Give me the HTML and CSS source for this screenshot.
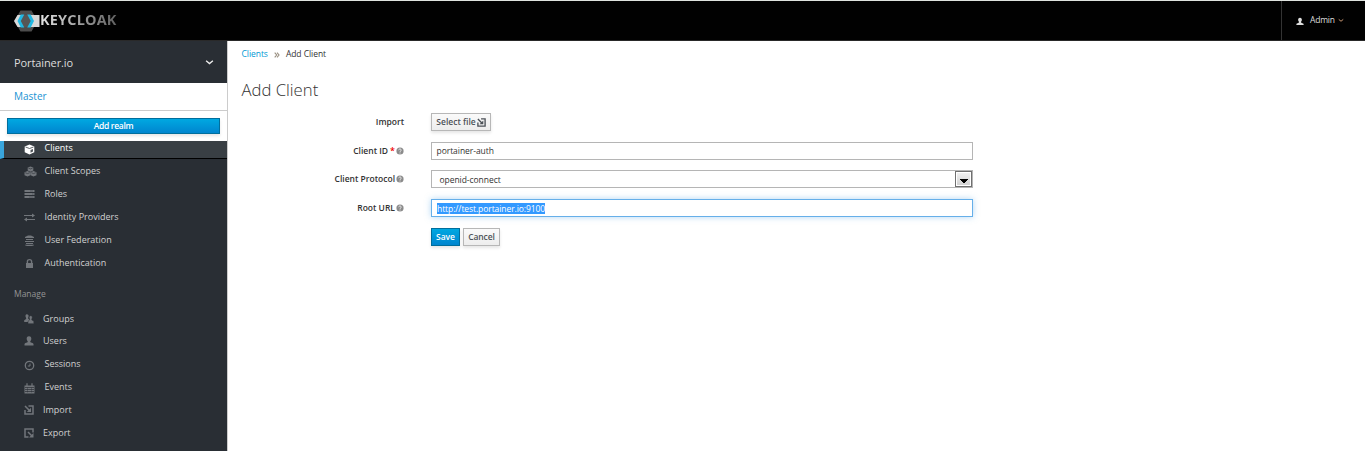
FILE: index.html
```html
<!DOCTYPE html>
<html lang="en">
<head>
<meta charset="utf-8">
<title>Keycloak - Add Client</title>
<link rel="stylesheet" href="styles.css">
</head>
<body>
<svg class="defs" aria-hidden="true">
  <symbol id="user" viewBox="0 0 10 10"><path d="M5 .3c1.700 0 2.500 1.200 2.300 2.700C7.200 4.200 6.700 4.800 6.300 5.200v.9c.3.700 3 .8 3.200 1.900V9.500H.5V8c.2-1.100 2.900-1.200 3.200-1.900v-.9C3.300 4.800 2.800 4.200 2.700 3 2.500 1.500 3.300.3 5 .3z" fill="currentColor"/></symbol>
  <symbol id="import" viewBox="0 0 10 10"><path d="M4.500 1H9v8H1V5M1 1l5 5" fill="none" stroke="currentColor" stroke-width="1.500"/><path d="M7 2.800V7H2.800z" fill="currentColor"/></symbol>
  <symbol id="help" viewBox="0 0 8 8"><circle cx="4" cy="4" r="3.600" fill="currentColor"/><path d="M2.700 3.200C2.800 1.500 5.400 1.700 5.200 3.200 5.100 4 4 3.900 4 4.900M4 5.500v1" fill="none" stroke="#fff" stroke-width=".8"/></symbol>
  <symbol id="chev" viewBox="0 0 8 6"><path d="M1 1.500 4 4l3-2.500" fill="none" stroke="currentColor" stroke-width="1.200"/></symbol>
</svg>
<header class="header">
  <div class="brand">
    <svg class="mark" width="26" height="22" viewBox="0 0 26 22">
      <path d="M6.500.5h11L23.500 11l-6 10.500h-11L.5 11z" fill="#4d4d4d"/>
      <path d="M3.500 5H25.500v12H3.500L0 11z" fill="#d8d8d8"/>
      <path d="M9 5h7L19 11l-3 6H9L6 11z" fill="#565656"/>
      <path d="M6.800 4.500h3.500L6.800 11l3.500 6.500H6.800L3.500 11z" fill="#22b8e3"/>
      <path d="M13.200 4.500h3.500L20 11l-3.300 6.500h-3.500L16.700 11z" fill="#22b8e3"/>
    </svg>
    <span class="wordmark">KEYCLOAK</span>
  </div>
  <div class="account">
    <svg class="account-icon"><use href="#user"/></svg>
    <span>Admin</span>
    <svg class="account-chev"><use href="#chev"/></svg>
  </div>
</header>
<div class="body">
  <nav class="sidebar">
    <div class="realm"><span>Portainer.io</span><svg class="realm-chev"><use href="#chev"/></svg></div>
    <div class="realm-menu">
      <a class="realm-link">Master</a>
      <div class="realm-add"><a class="add-button">Add realm</a></div>
    </div>
    <a class="item active"><svg viewBox="0 0 11 11"><path d="M5.500.6 10.300 2.400v5.800L5.500 10.600.7 8.200V2.400z" fill="#fff"/><path d="M1.500 3 5.500 4.500 9.500 3" fill="none" stroke="#393f44" stroke-width=".8"/><path d="M6.500 6 9 5v2.500L6.500 8.800z" fill="#54595e"/></svg><span>Clients</span></a>
    <a class="item"><svg class="wide" viewBox="0 0 13 11"><g fill="currentColor"><path d="M6.500.4 9.300 1.500v3L6.500 5.700 3.700 4.500v-3zM3.500 5 6.400 6.200v3L3.500 10.600.5 9.200v-3zM9.500 5l3 1.200v3l-3 1.400-2.900-1.400v-3z"/></g><path d="M4.300 2 6.500 2.900 8.700 2M1.200 6.700 3.500 7.600l2.300-.9M7.300 6.700l2.200.9 2.300-.9" fill="none" stroke="#292e34" stroke-width=".6"/></svg><span>Client Scopes</span></a>
    <a class="item"><svg viewBox="0 0 11 11"><path d="M.5 2h10M.5 5h10M.5 8h10" stroke="currentColor" stroke-width="2"/><path d="M6 2h3M8 5h1.500M5 8h4.500" stroke="#3d4348" stroke-width=".5"/></svg><span>Roles</span></a>
    <a class="item"><svg viewBox="0 0 11 11"><path d="M0 3.500h9M2 7.500h9" stroke="currentColor" stroke-width="1.100"/><path d="M8 1.500 11 3.500 8 5.500zM3 5.500 0 7.500 3 9.500z" fill="currentColor"/></svg><span>Identity Providers</span></a>
    <a class="item"><svg viewBox="0 0 11 11"><path d="M1 2 4 .5h3L10 2v1H1zM2 4h7v1H2zM1 6h9v1H1zM2 8h7v1H2zM1 9.700h9v.5L8 11H3L1 10.200z" fill="currentColor"/></svg><span>User Federation</span></a>
    <a class="item"><svg viewBox="0 0 11 11"><path d="M3.400 5.500V3.500c0-2.500 4.200-2.500 4.200 0v2" fill="none" stroke="currentColor" stroke-width="1.400"/><path d="M2 5h7v5H2z" fill="currentColor"/></svg><span>Authentication</span></a>
    <div class="section">Manage</div>
    <a class="item"><svg class="near" viewBox="0 0 10 10"><path d="M3 .3C4.900.4 5 2.300 4.200 3.800v1L6 6v2H.2V6.200L2.100 5v-1C1 2.200 1.300.3 3 .3z" fill="currentColor"/><path d="M6.500 1.700C8.400 1.600 8.700 3.500 7.800 5v1l2 .9V9.700H4V7.200L5.600 6V5C4.900 3.500 4.900 1.900 6.500 1.700z" fill="currentColor" stroke="#292e34" stroke-width=".5"/></svg><span>Groups</span></a>
    <a class="item short"><svg class="near"><use href="#user"/></svg><span>Users</span></a>
    <a class="item"><svg class="low" viewBox="0 0 11 11"><circle cx="5.500" cy="5.500" r="4.200" fill="none" stroke="currentColor" stroke-width="1.300"/><path d="M6 3.500V6H3.800" fill="none" stroke="currentColor"/></svg><span>Sessions</span></a>
    <a class="item"><svg class="low" viewBox="0 0 11 11"><path d="M.5 2.500h10v8H.5z" fill="currentColor"/><path d="M3 .3v3M8 .3v3" stroke="currentColor" stroke-width="1.200"/><path d="M1 4.500h9M1 6.500h9M1 8.500h9" stroke="#292e34" stroke-width=".7"/><path d="M3.500 4.500v5M7.500 4.500v5" stroke="#292e34" stroke-width=".4"/></svg><span>Events</span></a>
    <a class="item"><svg class="near"><use href="#import"/></svg><span>Import</span></a>
    <a class="item"><svg class="near" viewBox="0 0 10 10"><path d="M4.500 9H1V1h8v3.500M4 4l4 4" fill="none" stroke="currentColor" stroke-width="1.500"/><path d="M9.500 5v4.500H5z" fill="currentColor"/></svg><span>Export</span></a>
  </nav>
  <main class="main">
    <div class="crumbs"><a class="crumb-link">Clients</a><svg class="crumb-sep" viewBox="0 0 6 6"><path d="M.7.700 2.700 3 .7 5.300M3 .7 5 3 3 5.300" fill="none" stroke="#998f80" stroke-width="1.100"/></svg><span>Add Client</span></div>
    <h1 class="title">Add Client</h1>
    <form class="form">
      <div class="label"><span>Import</span></div>
      <div class="field"><span class="button select-file">Select file<svg><use href="#import"/></svg></span></div>
      <div class="label"><span>Client ID</span><b class="required">*</b><svg><use href="#help"/></svg></div>
      <div class="field"><div class="input">portainer-auth</div></div>
      <div class="label"><span>Client Protocol</span><svg><use href="#help"/></svg></div>
      <div class="field"><div class="input select"><span>openid-connect</span><span class="drop"><svg viewBox="0 0 8 4"><path d="M0 0h8v1H7v1H6v1H5v1H3V3H2V2H1V1H0z"/></svg></span></div></div>
      <div class="label"><span>Root URL</span><svg><use href="#help"/></svg></div>
      <div class="field"><div class="input focused"><mark class="selection">http://test.portainer.io:9100</mark></div></div>
      <div class="actions"><span class="button primary">Save</span><span class="button cancel">Cancel</span></div>
    </form>
  </main>
</div>
</body>
</html>
```

FILE: styles.css
```css
* { box-sizing: border-box; }
body { margin: 0; width: 1365px; height: 451px; overflow: hidden; background: #fff; color: #333; font: 9px/12px "Open Sans", sans-serif; }
svg { display: block; flex: none; }
span, a, mark { white-space: nowrap; }
.defs { display: none; }

.header { display: flex; justify-content: space-between; height: 41px; background: #010101; border-top: 1px solid #dfe3df; border-bottom: 1px solid #292929; }
.brand { display: flex; align-items: center; padding-left: 14px; }
.wordmark { margin-top: -1px; font: 700 14.500px/18px "Open Sans", sans-serif; letter-spacing: .15px; color: transparent; background: linear-gradient(90deg, #e4e4e4, #606060); background-clip: text; -webkit-background-clip: text; }
.account { display: flex; align-items: center; width: 84px; padding: 0 0 1px 14px; border-left: 1px solid #333; color: #ddd; font-size: 8.500px; letter-spacing: -.2px; }
.account-icon { width: 8px; height: 9px; margin: 2px 6px 0 0; }
.account-chev { width: 6px; height: 5px; margin: 1px 0 0 3px; color: #e0a880; }

.body { display: flex; height: 410px; }
.sidebar { width: 228px; flex: none; border-right: 1px solid #ccc; background: #292e34; color: #d1d1d1; }
.realm { display: flex; align-items: center; justify-content: space-between; height: 42px; padding: 2px 13px 0 14px; font-size: 11px; letter-spacing: -.1px; color: #ddd; }
.realm-chev { width: 9px; height: 7px; margin-top: -2px; color: #eee; }
.realm-menu { height: 58px; background: #fff; }
.realm-link { display: flex; align-items: center; height: 28px; padding: 0 0 2px 14px; border-bottom: 1px solid #ccc; font-size: 10px; color: #1a93d3; }
.realm-add { padding: 7px 7px 0; }
.add-button { display: block; height: 16px; border: 1px solid #006e9c; background: linear-gradient(#00a8e1, #0085cf); box-shadow: 0 2px 3px rgba(0, 0, 0, .1); color: #fff; font-weight: 600; font-size: 8.500px; letter-spacing: -.3px; line-height: 14px; text-align: center; }
.item { display: flex; align-items: center; height: 23px; padding-left: 24px; font-size: 9px; }
.item svg { width: 11px; height: 11px; margin-right: 9.500px; color: #72767b; position: relative; top: 1px; }
.item .wide { width: 13px; margin-right: 7.500px; }
.item .near { width: 10px; height: 10px; margin-right: 9px; top: 0; }
.item .low { top: 2px; }
.item.short { height: 22px; }
.active { height: 18px; padding: 0 0 3px 20px; border-left: 4px solid #39a5dc; border-bottom: 1px solid #000; background: #393f44; color: #fff; }
.section { display: flex; align-items: center; height: 33px; padding: 7px 0 0 14px; font-size: 8.500px; color: #949494; }

.main { flex: 1; padding: 7px 0 0 13.500px; }
.crumbs { display: flex; align-items: center; height: 12px; font-size: 8.500px; letter-spacing: -.05px; }
.crumb-link { color: #0099d3; }
.crumb-sep { width: 6px; height: 6px; margin: 1px 6px 0 6px; }
.title { height: 24px; margin: 18px 0 11px; font-weight: 300; font-size: 16.700px; line-height: 24px; }
.form { display: grid; grid-template-columns: 162.500px 542px; column-gap: 27px; grid-template-rows: 29px 28px 29px 29px 20px; }
.label { display: flex; align-items: center; justify-content: flex-end; height: 18px; font-weight: 600; font-size: 8.500px; }
.label svg { width: 8px; height: 8px; margin: 0 0 0 1px; color: #8b8b8b; }
.required { margin-left: 2px; color: #e00; font-weight: 600; font-size: 9px; }
.button { display: flex; align-items: center; justify-content: center; height: 18px; border: 1px solid #b7b7b7; background: linear-gradient(#fafafa, #ededed); box-shadow: 0 2px 3px rgba(0, 0, 0, .1); color: #4d5258; font-weight: 600; font-size: 8.500px; }
.select-file { width: 60px; }
.select-file svg { width: 9px; height: 9px; margin-left: 1px; }
.input { display: flex; align-items: center; height: 18px; padding: 0 4.500px; border: 1px solid #b5b5b5; font-size: 8.500px; letter-spacing: -.05px; }
.select { justify-content: space-between; padding: 0 0 0 7.500px; }
.select > span:first-child { padding-top: 2px; }
.drop { display: flex; align-items: center; justify-content: center; width: 17px; height: 16px; padding-top: 3px; border: 1px solid #707070; background: linear-gradient(#f2f2f2, #cfcfcf); box-shadow: inset 0 0 0 1px #fff; }
.drop svg { width: 8px; height: 4px; }
.focused { border-color: #66afe9; box-shadow: 0 0 6px rgba(102, 175, 233, .5); }
.selection { display: block; margin: 1px 0 0 .5px; height: 11px; line-height: 11px; background: #3399ff; color: #fff; letter-spacing: -.08px; }
.actions { grid-column: 2; display: flex; gap: 3px; }
.primary { width: 29px; border-color: #006e9c; background: linear-gradient(#00a8e1, #0085cf); color: #fff; }
.cancel { width: 37px; letter-spacing: -.1px; }
```
